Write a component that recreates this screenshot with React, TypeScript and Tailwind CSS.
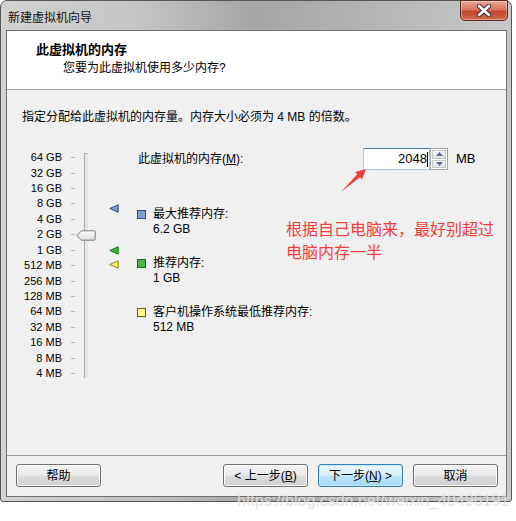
import React from "react";

const FONT = '"Liberation Sans", "Noto Sans CJK SC", sans-serif';

const labels = [
  "64 GB", "32 GB", "16 GB", "8 GB", "4 GB", "2 GB", "1 GB", "512 MB",
  "256 MB", "128 MB", "64 MB", "32 MB", "16 MB", "8 MB", "4 MB",
];

function Tri({ fill, stroke, top }: { fill: string; stroke: string; top: number }) {
  return (
    <svg className="absolute" style={{ left: 87, top }} width="10" height="9" viewBox="0 0 10 9">
      <path d="M0.8,4.5 L9.2,0.8 V8.2 Z" fill={fill} stroke={stroke} strokeWidth="1" strokeLinejoin="round" />
    </svg>
  );
}

function Item({ color, border, label, value }: { color: string; border: string; label: string; value: string }) {
  return (
    <div className="flex items-start">
      <div className="mt-[3px] w-[9px] h-[9px] border" style={{ background: color, borderColor: border }} />
      <div className="ml-[7px] flex flex-col leading-[15px]">
        <span>{label}</span>
        <span>{value}</span>
      </div>
    </div>
  );
}

function Btn({ children, primary }: { children: React.ReactNode; primary?: boolean }) {
  return (
    <div
      className={
        "w-[85px] h-[23px] rounded-[3px] border flex items-center justify-center text-[12px] " +
        (primary
          ? "border-[#3c7fb1] bg-[linear-gradient(180deg,#eaf6fd_0%,#d9f0fc_48%,#bee6fd_52%,#a7d9f5_100%)] shadow-[inset_0_0_0_1px_#c4e8fb]"
          : "border-[#707070] bg-[linear-gradient(180deg,#f2f2f2_0%,#ebebeb_48%,#dddddd_52%,#cfcfcf_100%)] shadow-[inset_0_0_0_1px_#fcfcfc]")
      }
    >
      {children}
    </div>
  );
}

export default function App() {
  return (
    <div className="relative w-[516px] h-[521px] bg-white text-black text-[12px]" style={{ fontFamily: FONT }}>
      <div className="w-[512px] h-[502px] flex flex-col border border-[#565656] rounded-t-[7px] rounded-b-[3px] pl-[5px] pr-[4px] bg-[linear-gradient(90deg,#d2d2d2_0%,#c6c6c6_25%,#a6a6a6_50%,#b4b4b4_72%,#c8c8c8_100%)]">
        {/* title bar */}
        <div className="h-[29px] flex items-start">
          <div className="pl-[2px] pt-[9px] text-[12px] leading-[16px] text-[#111]">新建虚拟机向导</div>
          <div className="ml-auto mr-[-1px] mt-[-1px] w-[48px] h-[21px] rounded-b-[5px] border border-[#5e2a22] bg-[linear-gradient(180deg,#e9a99a_0%,#d8755f_45%,#c2452d_55%,#d4694c_100%)] flex items-center justify-center shadow-[inset_0_0_0_1px_rgba(255,255,255,0.35)]">
            <svg width="16" height="13" viewBox="0 0 16 13">
              <path d="M3,2 L13,11 M13,2 L3,11" stroke="#3a2a28" strokeWidth="4.5" strokeLinecap="round" />
              <path d="M3,2 L13,11 M13,2 L3,11" stroke="#ffffff" strokeWidth="2.6" strokeLinecap="round" />
            </svg>
          </div>
        </div>

        {/* client */}
        <div className="flex flex-col h-[467px] border border-[#6f6f6f] bg-[#f0f0f0]">
          {/* header */}
          <div className="h-[59px] bg-white border-b border-[#a0a0a0] pl-[29px] pt-[11px]">
            <div className="font-bold text-[13px] leading-[16px]">此虚拟机的内存</div>
            <div className="mt-[2px] ml-[27px] leading-[16px]">您要为此虚拟机使用多少内存?</div>
          </div>

          {/* body */}
          <div className="flex-1 pl-[15px] pt-[19px]">
            <div className="leading-[16px]">指定分配给此虚拟机的内存量。内存大小必须为 4 MB 的倍数。</div>
            <div className="flex mt-[25px]">
              {/* slider */}
              <div className="relative w-[115px]">
                <div className="flex flex-col">
                  {labels.map((l) => (
                    <div key={l} className="flex items-center h-[15.43px]">
                      <div className="w-[40px] text-right text-[11px] leading-[15px] whitespace-nowrap">{l}</div>
                      <div className="ml-[9px] w-[4px] h-px bg-[#b4b4b4]" />
                    </div>
                  ))}
                </div>
                <div className="absolute left-[62px] top-[3px] w-[4px] h-[225px] border-l border-t border-[#a8a8a8] border-r border-r-[#e4e4e4] bg-[#e6e6e6]" />
                <svg className="absolute" style={{ left: 54, top: 80 }} width="20" height="11" viewBox="0 0 20 11">
                  <defs>
                    <linearGradient id="th" x1="0" y1="0" x2="0" y2="1">
                      <stop offset="0" stopColor="#ffffff" />
                      <stop offset="1" stopColor="#dcdcdc" />
                    </linearGradient>
                  </defs>
                  <path d="M0.8,5.5 L5.5,0.8 H18 Q19.2,0.8 19.2,2 V9 Q19.2,10.2 18,10.2 H5.5 Z" fill="url(#th)" stroke="#7a7a7a" strokeWidth="1" />
                </svg>
                <Tri fill="#7d9ccc" stroke="#2c4c80" top={54} />
                <Tri fill="#3fbb3f" stroke="#1c7a1c" top={96} />
                <Tri fill="#f2f25a" stroke="#8a8a1e" top={110} />
              </div>

              {/* content */}
              <div className="flex flex-col -mt-[2px]">
                <div className="flex items-center h-[22px]">
                  <div className="w-[226px] pl-[1px]">
                    此虚拟机的内存(<span className="underline">M</span>):
                  </div>
                  <div className="w-[67px] h-[22px] bg-white border border-[#a9cbe6] border-t-[#3d7bad] flex items-center justify-end pr-[1px] text-[13px]">
                    <span>2048</span>
                    <span className="w-px h-[15px] bg-black" />
                  </div>
                  <div className="w-[18px] h-[22px] flex flex-col border border-[#a8a8a8] bg-white">
                    <div className="flex-1 m-px border border-[#c8c8c8] bg-[linear-gradient(180deg,#f6f6f6,#e2e2e2)] flex items-center justify-center">
                      <svg width="7" height="4" viewBox="0 0 7 4"><path d="M0,4 L3.5,0 L7,4 Z" fill="#5a6c9a" /></svg>
                    </div>
                    <div className="flex-1 m-px mt-0 border border-[#c8c8c8] bg-[linear-gradient(180deg,#f6f6f6,#e2e2e2)] flex items-center justify-center">
                      <svg width="7" height="4" viewBox="0 0 7 4"><path d="M0,0 L3.5,4 L7,0 Z" fill="#5a6c9a" /></svg>
                    </div>
                  </div>
                  <span className="ml-[8px] text-[13px]">MB</span>
                </div>
                <div className="mt-[37px] flex flex-col gap-[19px]">
                  <Item color="#7f9fd0" border="#2f4f82" label="最大推荐内存:" value="6.2 GB" />
                  <Item color="#46b846" border="#1f621f" label="推荐内存:" value="1 GB" />
                  <Item color="#ffff8c" border="#5e5e20" label="客户机操作系统最低推荐内存:" value="512 MB" />
                </div>
              </div>
            </div>
          </div>

          {/* footer */}
          <div className="h-[41px] border-t border-[#a0a0a0] flex items-start pt-[8px] pl-[9px] pr-[8px]">
            <Btn>帮助</Btn>
            <div className="ml-auto flex gap-[10px]">
              <Btn>
                &lt; 上一步(<span className="underline">B</span>)
              </Btn>
              <Btn primary>
                下一步(<span className="underline">N</span>) &gt;
              </Btn>
              <Btn>取消</Btn>
            </div>
          </div>
        </div>
      </div>

      {/* annotation */}
      <div className="absolute left-[286px] top-[217px] text-[16px] leading-[23px] text-[#f23d3d]" style={{ fontFamily: '"Noto Sans CJK SC", sans-serif' }}>
        <div>根据自己电脑来，最好别超过</div>
        <div>电脑内存一半</div>
      </div>
      <svg className="absolute left-[330px] top-[160px]" width="40" height="40" viewBox="0 0 40 40">
        <polygon points="11,32 27.2,14.3 25.2,12.1 36,9 32,19.5 30,17.3" fill="#f23d3d" />
      </svg>

      {/* watermark */}
      <div className="absolute left-[237px] top-[492px] text-[16px] leading-[18px] text-[rgba(225,225,225,0.9)] whitespace-nowrap" style={{ fontFamily: '"Liberation Sans", sans-serif' }}>
        https://blog.csdn.net/weixin_40496191
      </div>
    </div>
  );
}
